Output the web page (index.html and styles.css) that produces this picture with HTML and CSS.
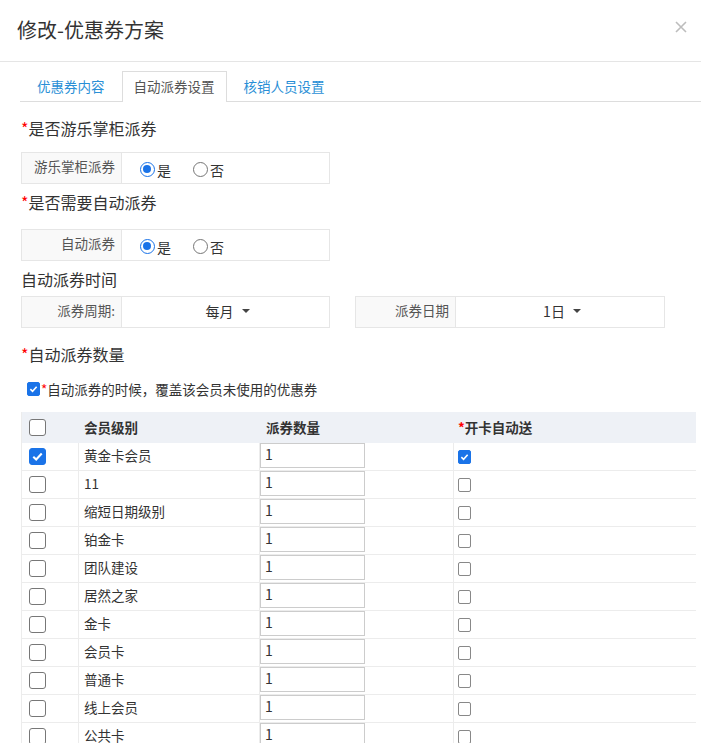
FILE: index.html
```html
<!DOCTYPE html>
<html lang="zh-CN">
<head>
<meta charset="utf-8">
<title>修改-优惠券方案</title>
<link rel="stylesheet" href="styles.css">
</head>
<body>
<div class="modal">
  <div class="modal-header">
    <h1 class="modal-title">修改-优惠券方案</h1>
    <span class="close" aria-label="关闭">
      <svg width="12" height="12" viewBox="0 0 12 12"><path d="M1 1L11 11M11 1L1 11" stroke="#bdbdbd" stroke-width="1.6" fill="none"/></svg>
    </span>
  </div>
  <div class="modal-body">
    <div class="tabs">
      <div class="tab">优惠券内容</div>
      <div class="tab active">自动派券设置</div>
      <div class="tab">核销人员设置</div>
    </div>

    <div class="sec-title s1"><span class="req">*</span>是否游乐掌柜派券</div>
    <div class="field">
      <div class="field-label">游乐掌柜派券</div>
      <div class="field-value radios">
        <label class="radio"><span class="dot on"></span>是</label>
        <label class="radio"><span class="dot"></span>否</label>
      </div>
    </div>

    <div class="sec-title s2"><span class="req">*</span>是否需要自动派券</div>
    <div class="field">
      <div class="field-label">自动派券</div>
      <div class="field-value radios">
        <label class="radio"><span class="dot on"></span>是</label>
        <label class="radio"><span class="dot"></span>否</label>
      </div>
    </div>

    <div class="sec-title s3">自动派券时间</div>
    <div class="field-pair">
      <div class="field">
        <div class="field-label">派券周期:</div>
        <div class="field-value select"><span>每月</span><span class="caret"></span></div>
      </div>
      <div class="field">
        <div class="field-label">派券日期</div>
        <div class="field-value select"><span>1日</span><span class="caret"></span></div>
      </div>
    </div>

    <div class="sec-title s4"><span class="req">*</span>自动派券数量</div>
    <div class="cover-line">
      <span class="cb small on"><svg viewBox="0 0 14 14"><path d="M3 7.2L5.8 10L11 4" stroke="#fff" stroke-width="2" fill="none"/></svg></span><span class="req">*</span>自动派券的时候，覆盖该会员未使用的优惠券
    </div>

    <div class="grid">
      <div class="row head">
        <div class="cell c1"><span class="cb"></span></div>
        <div class="cell c2">会员级别</div>
        <div class="cell c3">派券数量</div>
        <div class="cell c4"><span class="req">*</span>开卡自动送</div>
      </div>
      <div class="row">
        <div class="cell c1"><span class="cb on"><svg viewBox="0 0 16 16"><path d="M3.5 8.2L6.6 11.2L12.5 4.8" stroke="#fff" stroke-width="2.2" fill="none"/></svg></span></div>
        <div class="cell c2">黄金卡会员</div>
        <div class="cell c3"><span class="input">1</span></div>
        <div class="cell c4"><span class="cb small on"><svg viewBox="0 0 14 14"><path d="M3 7.2L5.8 10L11 4" stroke="#fff" stroke-width="2" fill="none"/></svg></span></div>
      </div>
      <div class="row">
        <div class="cell c1"><span class="cb"></span></div>
        <div class="cell c2">11</div>
        <div class="cell c3"><span class="input">1</span></div>
        <div class="cell c4"><span class="cb small"></span></div>
      </div>
      <div class="row">
        <div class="cell c1"><span class="cb"></span></div>
        <div class="cell c2">缩短日期级别</div>
        <div class="cell c3"><span class="input">1</span></div>
        <div class="cell c4"><span class="cb small"></span></div>
      </div>
      <div class="row">
        <div class="cell c1"><span class="cb"></span></div>
        <div class="cell c2">铂金卡</div>
        <div class="cell c3"><span class="input">1</span></div>
        <div class="cell c4"><span class="cb small"></span></div>
      </div>
      <div class="row">
        <div class="cell c1"><span class="cb"></span></div>
        <div class="cell c2">团队建设</div>
        <div class="cell c3"><span class="input">1</span></div>
        <div class="cell c4"><span class="cb small"></span></div>
      </div>
      <div class="row">
        <div class="cell c1"><span class="cb"></span></div>
        <div class="cell c2">居然之家</div>
        <div class="cell c3"><span class="input">1</span></div>
        <div class="cell c4"><span class="cb small"></span></div>
      </div>
      <div class="row">
        <div class="cell c1"><span class="cb"></span></div>
        <div class="cell c2">金卡</div>
        <div class="cell c3"><span class="input">1</span></div>
        <div class="cell c4"><span class="cb small"></span></div>
      </div>
      <div class="row">
        <div class="cell c1"><span class="cb"></span></div>
        <div class="cell c2">会员卡</div>
        <div class="cell c3"><span class="input">1</span></div>
        <div class="cell c4"><span class="cb small"></span></div>
      </div>
      <div class="row">
        <div class="cell c1"><span class="cb"></span></div>
        <div class="cell c2">普通卡</div>
        <div class="cell c3"><span class="input">1</span></div>
        <div class="cell c4"><span class="cb small"></span></div>
      </div>
      <div class="row">
        <div class="cell c1"><span class="cb"></span></div>
        <div class="cell c2">线上会员</div>
        <div class="cell c3"><span class="input">1</span></div>
        <div class="cell c4"><span class="cb small"></span></div>
      </div>
      <div class="row">
        <div class="cell c1"><span class="cb"></span></div>
        <div class="cell c2">公共卡</div>
        <div class="cell c3"><span class="input">1</span></div>
        <div class="cell c4"><span class="cb small"></span></div>
      </div>
    </div>
  </div>
</div>
</body>
</html>
```
FILE: styles.css
```css
* { box-sizing: border-box; }
html, body { margin: 0; padding: 0; background: #fff; }
body {
  font-family: "Noto Sans CJK SC", "Liberation Sans", sans-serif;
  color: #333;
}
.modal {
  width: 701px;
  height: 743px;
  overflow: hidden;
  background: #fff;
}
.modal-header {
  height: 62px;
  border-bottom: 1px solid #e5e5e5;
  display: flex;
  align-items: center;
  justify-content: space-between;
  padding: 0 14px 0 17px;
}
.modal-title {
  margin: 0;
  font-size: 20px;
  font-weight: normal;
  color: #333;
  line-height: 28px;
  margin-top: -2px;
}
.close {
  display: flex;
  margin-top: -8px;
}
.modal-body {
  padding: 9px 0 0 20px;
}
.tabs {
  display: flex;
  height: 31px;
  border-bottom: 1px solid #ddd;
}
.tab {
  height: 31px;
  padding: 0 16px;
  font-size: 13.5px;
  line-height: 28px;
  color: #2a8fd6;
  border: 1px solid transparent;
  border-bottom: none;
}
.tab.active {
  color: #555;
  background: #fff;
  border-color: #ddd;
  height: 31px;
  padding: 0 11px;
  margin-bottom: -1px;
  position: relative;
}
.req { color: #f00; }
.sec-title {
  font-size: 16px;
  line-height: 24px;
  margin-left: 1px;
  color: #333;
}
.s1 { margin-top: 14px; margin-bottom: 12px; }
.s2 { margin-top: 6px; margin-bottom: 15px; }
.s3 { margin-top: 6px; margin-bottom: 5px; }
.s4 { margin-top: 14px; margin-bottom: 13px; }
.field {
  display: flex;
  width: 309px;
  height: 32px;
  border: 1px solid #e6e6e6;
  margin-left: 1px;
}
.field-label {
  width: 100px;
  flex: none;
  background: #f9f9f9;
  border-right: 1px solid #e6e6e6;
  font-size: 13.5px;
  color: #555;
  text-align: right;
  padding-right: 6px;
  line-height: 27px;
}
.field-value {
  flex: 1;
  display: flex;
  align-items: center;
  font-size: 14px;
}
.radios { padding-left: 18px; padding-top: 3px; gap: 22px; }
.radio {
  display: flex;
  align-items: center;
  gap: 2px;
  color: #333;
  line-height: 20px;
}
.dot {
  width: 15px;
  height: 15px;
  border-radius: 50%;
  border: 1px solid #767676;
  background: #fff;
  display: inline-block;
  position: relative;
}
.dot.on { border: 1.5px solid #1a73e8; }
.dot.on::after {
  content: "";
  position: absolute;
  left: 2px; top: 2px;
  width: 8px; height: 8px;
  border-radius: 50%;
  background: #1a73e8;
}
.field-pair { display: flex; gap: 25px; }
.field-pair .field:last-child { width: 310px; margin-left: 0; }
.select {
  justify-content: center;
  gap: 8px;
  color: #333;
  font-size: 14px;
  padding-left: 4px;
  padding-bottom: 2px;
}
.caret {
  width: 0; height: 0;
  border-left: 4px solid transparent;
  border-right: 4px solid transparent;
  border-top: 4px solid #444;
  display: inline-block;
}
.cover-line {
  display: flex;
  align-items: center;
  font-size: 13.5px;
  color: #333;
  height: 20px;
  padding-left: 7px;
  margin-bottom: 13px;
}
.cover-line .cb.small { margin-right: 1px; }
.cb {
  width: 17px;
  height: 17px;
  border: 1.5px solid #777;
  border-radius: 3px;
  background: #fff;
  display: inline-flex;
}
.cb svg { width: 100%; height: 100%; }
.cb.on { background: #1a73e8; border-color: #1a73e8; }
.cb.small {
  width: 13px; height: 14px;
  border: 1px solid #888;
  border-radius: 2px;
}
.cb.small.on { border-color: #1a73e8; background: #1a73e8; }
.grid {
  width: 675px;
  margin-left: 1px;
  border-left: 1px solid #ececec;
}
.row {
  display: grid;
  grid-template-columns: 57px 181px 194px 242px;
  height: 28px;
  border-bottom: 1px solid #ececec;
  font-size: 13.5px;
  color: #333;
}
.row.head {
  height: 31px;
  background: #eef1f6;
  border-bottom: none;
  font-weight: bold;
}
.cell {
  display: flex;
  align-items: center;
  padding-left: 5px;
  border-right: 1px solid #ececec;
}
.head .cell { border-right: none; }
.c1 { padding-left: 7px; }
.c2 { padding-bottom: 3px; }
.head .c2, .head .c3, .head .c4 { padding-bottom: 2px; }
.c3 { padding-left: 0; align-items: flex-start; }
.head .c3 { padding-left: 6px; align-items: center; }
.c4 { padding-left: 4px; border-right: none; }
.input {
  display: block;
  width: 105px;
  height: 25px;
  margin-top: 0;
  border: 1px solid #ccc;
  padding-left: 4px;
  line-height: 21px;
  font-size: 14px;
  color: #333;
}
```
